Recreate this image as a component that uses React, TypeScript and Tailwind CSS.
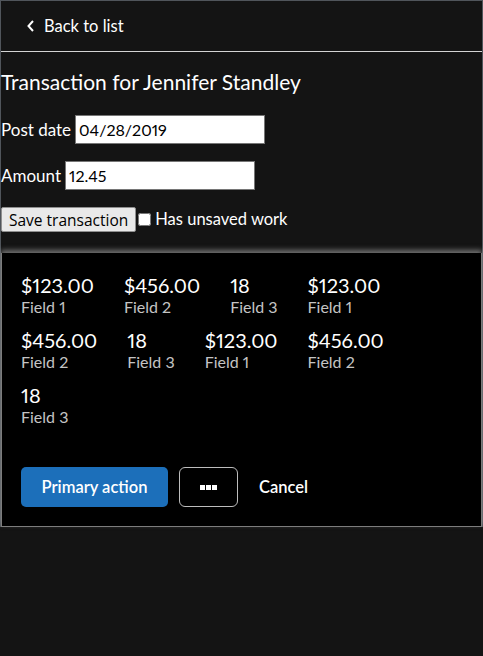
const items = [
  { value: "$123.00", label: "Field 1" },
  { value: "$456.00", label: "Field 2" },
  { value: "18", label: "Field 3" },
  { value: "$123.00", label: "Field 1" },
  { value: "$456.00", label: "Field 2" },
  { value: "18", label: "Field 3" },
  { value: "$123.00", label: "Field 1" },
  { value: "$456.00", label: "Field 2" },
  { value: "18", label: "Field 3" },
];

export default function App() {
  return (
    <div className="min-h-screen bg-[#141414] text-white font-['Lato',sans-serif] proportional-nums">
      <div className="border-x border-t border-[#50555b]">
        {/* Header */}
        <div className="h-[51px] flex items-center pl-[26px] border-b border-[#d4d4d4]">
          <button className="flex items-center gap-[9px] text-[16.5px]">
            <svg width="8" height="12" viewBox="0 0 8 12" fill="none" stroke="white" strokeWidth="2">
              <path d="M6 1 L1.5 6 L6 11" />
            </svg>
            Back to list
          </button>
        </div>

        {/* Form */}
        <div className="pt-[17px] pb-[21px]">
          <h2 className="text-[21px] leading-[26px] mb-[20px]">Transaction for Jennifer Standley</h2>
          <div className="flex flex-col gap-[17px]">
            <label className="flex items-center gap-[4px] text-[17px]">
              Post date
              <input
                defaultValue="04/28/2019"
                className="w-[190px] h-[29px] bg-white text-black border border-[#767676] px-[3px] text-[16px]"
              />
            </label>
            <label className="flex items-center gap-[4px] text-[17px]">
              Amount
              <input
                defaultValue="12.45"
                className="w-[190px] h-[29px] bg-white text-black border border-[#767676] px-[3px] text-[16px]"
              />
            </label>
            <div className="flex items-center">
              <button className="h-[25px] px-[7px] bg-[#e9e9e9] text-black border border-[#8f8f8f] rounded-[2px] text-[15.5px] leading-[20px] font-['Open_Sans',sans-serif]">
                Save transaction
              </button>
              <label className="flex items-center gap-[4px] text-[16.5px] ml-[2px]">
                <input type="checkbox" className="w-[13px] h-[13px]" />
                Has unsaved work
              </label>
            </div>
          </div>
        </div>

        {/* Summary */}
        <div className="bg-black border-x border-b border-[#7d7d7d] shadow-[0_-3px_5px_rgba(190,190,190,0.55)] pl-[19px] pr-[20px] pt-[21px] pb-[19px]">
          <div className="flex flex-wrap gap-x-[30px] gap-y-[11px] w-[400px]">
            {items.map((it, idx) => (
              <div key={idx} className="flex flex-col">
                <span className="text-[20px] leading-[22px]">{it.value}</span>
                <span className="text-[16px] leading-[22px] text-[#c4c4c4]">{it.label}</span>
              </div>
            ))}
          </div>
          <div className="flex items-center mt-[39px]">
            <button className="h-[40px] w-[147px] rounded-[5px] bg-[#1c6fba] text-[16.5px] font-semibold">
              Primary action
            </button>
            <button className="ml-[11px] h-[40px] w-[59px] rounded-[6px] border border-[#bdbdbd] flex items-center justify-center gap-[1px]">
              <span className="w-[5px] h-[5px] bg-white" />
              <span className="w-[5px] h-[5px] bg-white" />
              <span className="w-[5px] h-[5px] bg-white" />
            </button>
            <button className="ml-[21px] text-[16.5px] font-semibold">Cancel</button>
          </div>
        </div>
      </div>
    </div>
  );
}
